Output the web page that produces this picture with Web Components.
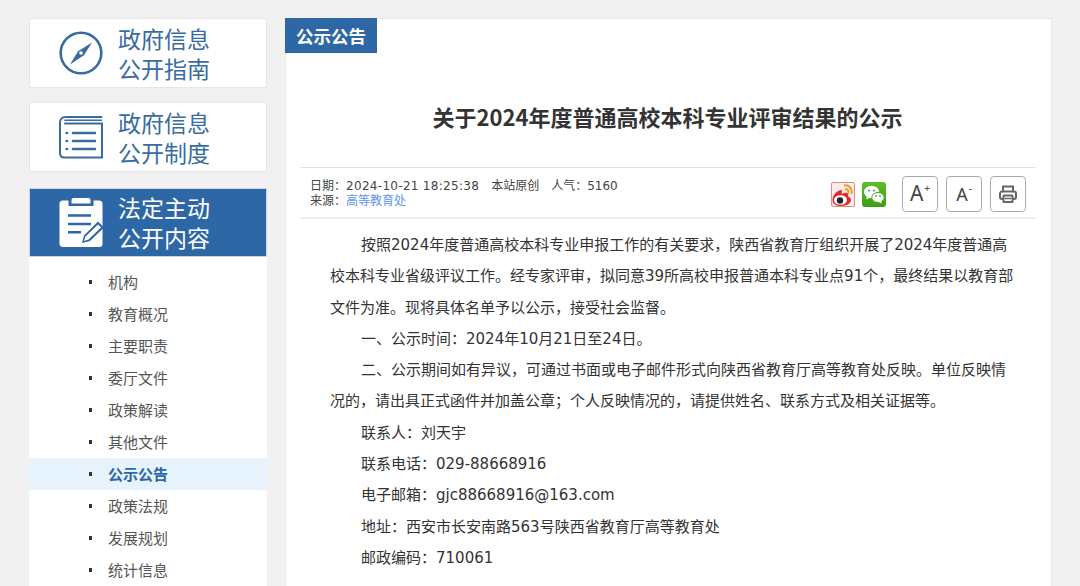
<!DOCTYPE html>
<html lang="zh-CN"><head><meta charset="utf-8"><title>公示</title>
<style>
html,body{margin:0;padding:0;height:586px;overflow:hidden;background:#f1f1f1}
body{font-family:"DejaVu Sans","Noto Sans CJK SC",sans-serif;}
</style></head><body>
<gov-page>
  <gov-side slot="side">
    <gov-card>
      <svg slot="icon" width="46" height="46" viewBox="0 0 46 46" fill="none"><circle cx="23" cy="23" r="20.300" stroke="#386c9f" stroke-width="2.600"/><path d="M34 12.500 25.500 26 20.500 21Z" fill="#386c9f"/><path d="M12 34.500 20.500 20.500 25.500 25.500Z" fill="#386c9f"/><circle cx="23" cy="23" r="1.800" fill="#fff"/></svg>
      政府信息<br>公开指南
    </gov-card>
    <gov-card>
      <svg slot="icon" width="46" height="46" viewBox="0 0 46 46" fill="none" stroke="#386c9f" stroke-linecap="round"><path d="M43.500 3H7.500C3.500 3 2 6 2 8.500V39C2 42 3.500 43.500 6.500 43.500H44V9.500H7" stroke-width="2"/><path d="M7 6.200H43.500" stroke-width="1.600"/><path d="M15 19H37M15 27H37M15 35H37" stroke-width="2.400"/><path d="M8.500 19h.5M8.500 27h.5M8.500 35h.5" stroke-width="2.400"/></svg>
      政府信息<br>公开制度
    </gov-card>
    <gov-card active>
      <svg slot="icon" width="46" height="50" viewBox="0 0 46 50"><path d="M15.500 1h15a2 2 0 0 1 2 2V6.500h-19V3a2 2 0 0 1 2-2Z" fill="#fff"/><path d="M5 3.500h5.500V9h25V3.500H41a3.500 3.500 0 0 1 3.500 3.500v40a3 3 0 0 1-3 3H5a3.500 3.500 0 0 1-3.500-3V7A3.500 3.500 0 0 1 5 3.500Z" fill="#fff"/><path d="M10 18.500H33M10 27H33M10 35.300H23" stroke="#2d67a5" stroke-width="2.600" fill="none"/><path d="M24 46 26 38.500 40 24.500 46 30.500 32 44Z" fill="#2d67a5"/><path d="M26 44 27.500 39.500 40 27.500 43 30.500 30.500 42.500Z" fill="#fff"/></svg>
      法定主动<br>公开内容
    </gov-card>
    <gov-nav>
      <gov-nav-item>机构</gov-nav-item>
      <gov-nav-item>教育概况</gov-nav-item>
      <gov-nav-item>主要职责</gov-nav-item>
      <gov-nav-item>委厅文件</gov-nav-item>
      <gov-nav-item>政策解读</gov-nav-item>
      <gov-nav-item>其他文件</gov-nav-item>
      <gov-nav-item active>公示公告</gov-nav-item>
      <gov-nav-item>政策法规</gov-nav-item>
      <gov-nav-item>发展规划</gov-nav-item>
      <gov-nav-item>统计信息</gov-nav-item>
    </gov-nav>
  </gov-side>
  <gov-article slot="main" tab="公示公告" heading="关于2024年度普通高校本科专业评审结果的公示">
    <gov-meta slot="meta"></gov-meta>
    <p>按照2024年度普通高校本科专业申报工作的有关要求，陕西省教育厅组织开展了2024年度普通高校本科专业省级评议工作。经专家评审，拟同意39所高校申报普通本科专业点91个，最终结果以教育部文件为准。现将具体名单予以公示，接受社会监督。</p>
    <p>一、公示时间：2024年10月21日至24日。</p>
    <p>二、公示期间如有异议，可通过书面或电子邮件形式向陕西省教育厅高等教育处反映。单位反映情况的，请出具正式函件并加盖公章；个人反映情况的，请提供姓名、联系方式及相关证据等。</p>
    <p>联系人：刘天宇</p>
    <p>联系电话：029-88668916</p>
    <p>电子邮箱：gjc88668916@163.com</p>
    <p>地址：西安市长安南路563号陕西省教育厅高等教育处</p>
    <p>邮政编码：710061</p>
  </gov-article>
</gov-page>
<script>
function def(name,html,init){customElements.define(name,class extends HTMLElement{constructor(){super();this.attachShadow({mode:"open"}).innerHTML=html;}connectedCallback(){init&&init(this)}})}
def("gov-page",`<style>:host{display:flex;gap:18px;padding:18px 0 0 29px;align-items:flex-start;height:568px;overflow:hidden}</style><slot name="side"></slot><slot name="main"></slot>`);
def("gov-side",`<style>:host{display:flex;flex-direction:column;width:238px;flex:none}</style><slot></slot>`);
def("gov-card",`<style>
:host{display:flex;align-items:center;box-sizing:border-box;height:70px;margin-bottom:14px;background:#fff;border:1px solid #e6e6e6;color:#386c9f;font:23px/30.500px "Noto Sans CJK SC",sans-serif;padding-left:28px}
:host([active]){background:#2d67a5;border-color:#c9d5e2;color:#fff;margin:2px 0 0;height:69px;padding-bottom:1px}
.i{width:46px;height:50px;display:flex;align-items:center;justify-content:center;margin-right:14px;flex:none}
</style><div class="i"><slot name="icon"></slot></div><div><slot></slot></div>`);
def("gov-nav",`<style>:host{display:block;background:#fff;padding-top:9px;padding-bottom:20px}</style><slot></slot>`);
def("gov-nav-item",`<style>
:host{display:flex;align-items:center;height:32px;padding-left:60px;color:#555;font:15px/32px "Noto Sans CJK SC",sans-serif}
:host([active]){background:#e6f3fd;color:#2d67a5;font-weight:700}
i{width:3px;height:4px;background:#333;margin-right:16px}
</style><i></i><slot></slot>`);
def("gov-article",`<style>
:host{display:block;box-sizing:border-box;width:767px;height:600px;background:#fff;border:1px solid #e8e8e8;border-bottom:0;color:#333}
.tab{display:block;width:92px;height:35px;margin:-1px 0 0 -1px;background:#2d67a5;color:#fff;font:700 17.500px/35px "Noto Sans CJK SC",sans-serif;text-align:center}
h1{margin:43px 2px 0 0;height:71px;font:700 22px/40px "Noto Sans CJK SC",sans-serif;color:#333;text-align:center}
.wrap{margin:0 15px 0 14px}
.body{padding:11px 36px 0 44px}
::slotted(p){margin:0;font:15px/31.300px "DejaVu Sans","Noto Sans CJK SC",sans-serif;color:#333;text-indent:31px}
</style><div class="tab"></div><h1></h1><div class="wrap"><slot name="meta"></slot></div><div class="body"><slot></slot></div>`,
el=>{el.shadowRoot.querySelector(".tab").textContent=el.getAttribute("tab");el.shadowRoot.querySelector("h1").textContent=el.getAttribute("heading")});
def("gov-meta",`<style>
:host{display:flex;align-items:center;justify-content:space-between;box-sizing:border-box;height:52px;border-top:1px solid #e2e2e2;border-bottom:2px solid #eeeeee;padding:0 10px;font:12px/15px "DejaVu Sans","Noto Sans CJK SC",sans-serif;color:#444}
a{color:#5f94f0;text-decoration:none}
.tools{display:flex;align-items:center;margin-top:2px}
.b{box-sizing:border-box;width:36px;height:36px;border:1px solid #aaa;border-radius:4px;margin-left:8px;display:flex;align-items:center;justify-content:center;color:#444;font:21px/1 "Noto Sans",sans-serif}
.b.sm{font-size:18px}
.b sup{font-size:10px;line-height:1;margin:-11px 0 0 1px}
.s{display:block;margin-top:2px}
.m{padding-top:2px}
.m b{font-weight:400;letter-spacing:.3px}
.m span{margin-left:12px}
</style>
<div class="m"><div>日期：<b>2024-10-21 18:25:38</b><span>本站原创</span><span>人气：5160</span></div><div>来源：<a>高等教育处</a></div></div>
<div class="tools">
<svg class="s" style="margin-right:7px" width="24" height="25" viewBox="0 0 24 25"><rect x=".5" y=".5" width="23" height="24" rx="1.500" fill="#fbeeea" stroke="#dd8a85"/><path d="M10 8C5 9 1.500 14 1.500 18c0 4 4.500 6 8.500 6 6 0 10-3 10-6 0-3-3-3-3-4 1-3-1-4-4-3-2 1-3 1-2-1 0-2-1-2-1-2Z" fill="#e6252c"/><ellipse cx="9.500" cy="18" rx="6.500" ry="4.800" fill="#fff"/><circle cx="9" cy="18.500" r="3.200" fill="#222"/><path d="M13 3.500c5-1 8.500 3 7.500 8.500M14 7.500c3-1 3.800 1.500 3.500 4" fill="none" stroke="#f29b1c" stroke-width="2"/></svg>
<svg class="s" width="24" height="25" viewBox="0 0 24 25"><defs><linearGradient id="g" x1="0" y1="0" x2="0" y2="1"><stop offset="0" stop-color="#5cbf28"/><stop offset="1" stop-color="#3d9c14"/></linearGradient></defs><rect width="24" height="25" rx="3" fill="url(#g)"/><ellipse cx="9.500" cy="10" rx="7.500" ry="6.200" fill="#fff"/><path d="M5 14l-.8 3.500L8 15.500Z" fill="#fff"/><ellipse cx="16" cy="15.500" rx="6.200" ry="5" fill="#fff" stroke="#43a81a"/><path d="M19 19l1 2.500-3.500-1.500Z" fill="#fff"/><circle cx="7" cy="8.500" r="1" fill="#43a81a"/><circle cx="12" cy="8.500" r="1" fill="#43a81a"/><circle cx="14" cy="14" r=".9" fill="#43a81a"/><circle cx="18" cy="14" r=".9" fill="#43a81a"/></svg>
<div class="b" style="margin-left:16px">A<sup>+</sup></div>
<div class="b sm">A<sup>-</sup></div>
<div class="b"><svg width="18" height="18" viewBox="0 0 18 18" fill="none" stroke="#666" stroke-width="2"><path d="M4 6V1.500h10V6"/><path d="M4.500 14H3a2 2 0 0 1-2-2V8.500a2 2 0 0 1 2-2h12a2 2 0 0 1 2 2V12a2 2 0 0 1-2 2h-1.500"/><rect x="4.500" y="10.500" width="9" height="6.500" rx=".5" fill="#fff"/><path d="M6 13.500h6" stroke-width="1.500"/></svg></div>
</div>`);
</script>
</body></html>
